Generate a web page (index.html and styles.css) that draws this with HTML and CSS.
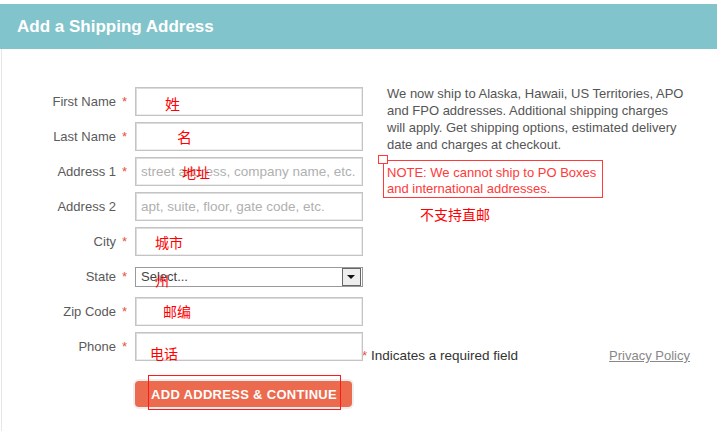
FILE: index.html
```html
<!DOCTYPE html>
<html lang="en">
  <head>
    <meta charset="UTF-8" />
    <meta name="viewport" content="width=device-width, initial-scale=1.0" />
    <title>Add a Shipping Address</title>
    <link rel="stylesheet" href="styles.css">
  </head>
  <body>
    <div class="panel">
      <div class="panel-head">Add a Shipping Address</div>
      <div class="panel-body">
        <form class="address-form">
          <div class="row">
            <label>First Name<span class="req">*</span></label>
            <div class="field"><input type="text" /><span class="note-cn n-first">姓</span></div>
          </div>
          <div class="row">
            <label>Last Name<span class="req">*</span></label>
            <div class="field"><input type="text" /><span class="note-cn n-last">名</span></div>
          </div>
          <div class="row">
            <label>Address 1<span class="req">*</span></label>
            <div class="field"><input type="text" placeholder="street address, company name, etc." /><span class="note-cn n-addr">地址</span></div>
          </div>
          <div class="row">
            <label>Address 2<span class="req"></span></label>
            <div class="field"><input type="text" placeholder="apt, suite, floor, gate code, etc." /></div>
          </div>
          <div class="row">
            <label>City<span class="req">*</span></label>
            <div class="field"><input type="text" /><span class="note-cn n-city">城市</span></div>
          </div>
          <div class="row row-select">
            <label>State<span class="req">*</span></label>
            <div class="field">
              <div class="select"><span>Select...</span><span class="arrow"></span></div>
              <span class="note-cn n-state">州</span>
            </div>
          </div>
          <div class="row">
            <label>Zip Code<span class="req">*</span></label>
            <div class="field"><input type="text" /><span class="note-cn n-zip">邮编</span></div>
          </div>
          <div class="row">
            <label>Phone<span class="req">*</span></label>
            <div class="field"><input type="text" /><span class="note-cn n-phone">电话</span></div>
          </div>
          <div class="actions">
            <button type="button" class="button">ADD ADDRESS &amp; CONTINUE</button>
            <span class="mark-box"></span>
          </div>
        </form>

        <div class="aside">
          <p class="info">We now ship to Alaska, Hawaii, US Territories, APO and FPO addresses. Additional shipping charges will apply. Get shipping options, estimated delivery date and charges at checkout.</p>
          <div class="warning">
            <span class="corner"></span>
            NOTE: We cannot ship to PO Boxes and international addresses.
          </div>
          <div class="warning-cn">不支持直邮</div>
          <div class="foot">
            <span class="legend"><span class="req">*</span> Indicates a required field</span>
            <a href="#" class="privacy">Privacy Policy</a>
          </div>
        </div>
      </div>
    </div>
  </body>
</html>
```

FILE: styles.css
```css
body {
  margin: 0;
  background-color: white;
  font-family: "Liberation Sans", Arial, sans-serif;
  color: #555;
}

.panel {
  width: 717px;
  padding-top: 4px;
}

.panel-head {
  height: 45px;
  line-height: 45px;
  padding-left: 17px;
  background-color: #82c4cb;
  color: white;
  font-size: 17px;
  font-weight: bold;
}

.panel-body {
  display: flex;
  margin-left: 1px;
  border-left: 1px solid #e6e6e6;
  height: 382px;
}

.address-form {
  padding-top: 38px;
  width: 360px;
}

.row {
  display: grid;
  grid-template-columns: 125px 228px;
  column-gap: 8px;
  align-items: center;
  height: 29px;
  margin-bottom: 6px;
}

.row label {
  text-align: right;
  font-size: 13px;
  color: #5a5a5a;
}

.req {
  display: inline-block;
  width: 11px;
  text-align: right;
  color: #e8503a;
}

.field {
  position: relative;
  height: 29px;
}

.field input {
  box-sizing: border-box;
  width: 228px;
  height: 29px;
  padding: 0 5px;
  border: 1px solid #c4c4c4;
  box-shadow: inset 1px 1px 0 #dcdcdc, inset -1px -1px 0 #ececec;
  font-family: "Liberation Sans", Arial, sans-serif;
  font-size: 13.5px;
  outline: none;
}

.field input::placeholder {
  color: #b0b0b0;
}

.row-select .field {
  display: flex;
  align-items: center;
}

.select {
  box-sizing: border-box;
  display: flex;
  align-items: center;
  justify-content: space-between;
  width: 228px;
  height: 20px;
  padding-left: 5px;
  border: 1px solid #9a9a9a;
  font-size: 13px;
  color: #444;
}

.select .arrow {
  position: relative;
  width: 17px;
  height: 16px;
  margin-right: 1px;
  border: 1px solid #666;
  background-color: #eee;
}

.select .arrow::after {
  content: "";
  position: absolute;
  left: 4px;
  top: 6px;
  border-left: 4px solid transparent;
  border-right: 4px solid transparent;
  border-top: 4px solid #111;
}

.note-cn {
  position: absolute;
  color: #ff0000;
  font-family: "Noto Sans CJK SC", sans-serif;
  font-size: 14px;
  line-height: 16px;
}

.n-first { left: 30px; top: 9px; font-size: 15px; }
.n-last { left: 42px; top: 7px; font-size: 15px; }
.n-addr { left: 47px; top: 7px; }
.n-city { left: 20px; top: 7px; }
.n-state { left: 20px; top: 10px; }
.n-zip { left: 28px; top: 6px; }
.n-phone { left: 15px; top: 13px; }

.actions {
  position: relative;
  margin-top: 20px;
  margin-left: 133px;
}

.button {
  width: 217px;
  height: 26px;
  padding: 0 15px 0 0;
  border: none;
  border-radius: 4px;
  background-color: #ec6a4e;
  box-shadow: 0 0 0 2px #efefef;
  color: white;
  font-family: "Liberation Sans", Arial, sans-serif;
  font-size: 13px;
  font-weight: bold;
  letter-spacing: 0.3px;
  text-align: right;
  cursor: pointer;
}

.mark-box {
  position: absolute;
  left: 13px;
  top: -6px;
  width: 191px;
  height: 33px;
  border: 1px solid #ff1a1a;
}

.aside {
  display: flex;
  flex-direction: column;
  padding-top: 36px;
  padding-left: 25px;
  width: 302px;
  font-size: 13px;
}

.info {
  margin: 0;
  line-height: 17px;
  color: #555;
}

.warning {
  position: relative;
  box-sizing: border-box;
  width: 220px;
  height: 38px;
  margin-top: 7px;
  margin-left: -4px;
  padding: 4px 0 0 3px;
  border: 1px solid #ff3a3a;
  color: #ff3a3a;
  line-height: 16px;
}

.corner {
  position: absolute;
  left: -6px;
  top: -6px;
  width: 8px;
  height: 7px;
  border: 1px solid #ff3a3a;
  background-color: white;
}

.warning-cn {
  margin-top: 8px;
  margin-left: 33px;
  color: #ff0000;
  font-family: "Noto Sans CJK SC", sans-serif;
  font-size: 14px;
  line-height: 16px;
}

.foot {
  display: flex;
  justify-content: space-between;
  margin-top: 126px;
  margin-left: -25px;
  width: 328px;
}

.legend {
  color: #333;
  font-size: 13.5px;
}

.legend .req {
  width: auto;
}

.privacy {
  color: #888;
  text-decoration: underline;
}
```
